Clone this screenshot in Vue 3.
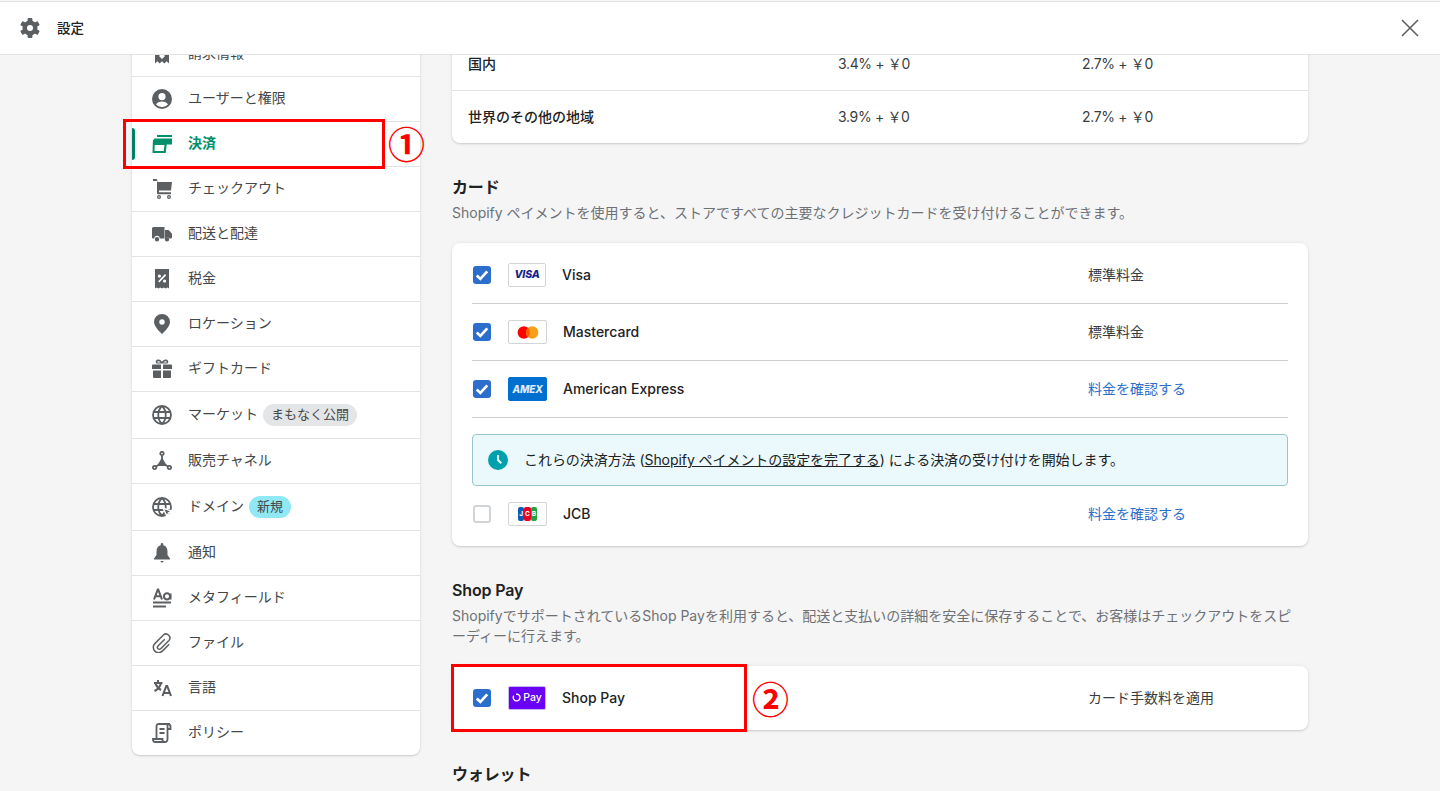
<script setup>
const gridLines = 'M10 1a9 9 0 1 0 0 18 9 9 0 0 0 0-18zM10 1c-5 5-5 13 0 18M10 1c5 5 5 13 0 18M1.500 7h17M1.500 13h17'
const icons = {
  billing: [{ t: 'f', d: 'M3 0h14v19.500l-2.300-2.200-2.400 2.200-2.300-2.200-2.300 2.200-2.400-2.200L3 19.500zM7 12l3 3 3-3-3-3z' }],
  user: [{ t: 'f', d: 'M10 0a10 10 0 1 0 0 20 10 10 0 0 0 0-20zM10 4a3.600 3.600 0 1 1 0 7.200A3.600 3.600 0 0 1 10 4zM4 15.600c1.100-2 3.200-3 6-3s4.900 1 6 3A8 8 0 0 1 10 18a8 8 0 0 1-6-2.400z' }],
  card: [{ t: 'f', d: 'M5 1h15v2H5zM2.500 4.500H20v6h-5.300l-1 8.500H.5l.4-12.500zM2.700 11l-.2 6h9.300l.7-6z' }],
  cart: [{ t: 'f', d: 'M1 0h3.200a1 1 0 0 1 1 .9L5.400 3H20l-1 8.500H7v1.700h12v2H6a1 1 0 0 1-1-1V2H1zM7 16a2 2 0 1 1 0 4 2 2 0 0 1 0-4zm0 1.300a.7.7 0 1 0 0 1.400.7.7 0 0 0 0-1.400zM17 16a2 2 0 1 1 0 4 2 2 0 0 1 0-4zm0 1.300a.7.7 0 1 0 0 1.400.7.7 0 0 0 0-1.400z' }],
  truck: [{ t: 'f', d: 'M1.500 3H12.500v11.500H7.700a2.700 2.700 0 0 0-5.400 0H1a1 1 0 0 1-1-1V4.500A1.500 1.500 0 0 1 1.500 3zM13 6h3.300a1 1 0 0 1 .8.4l2.900 3.300v3.800a1 1 0 0 1-1 1h-1.300a2.700 2.700 0 0 0-4.700-.2zM5 13a2.200 2.200 0 1 1 0 4.400A2.200 2.200 0 0 1 5 13zM15 13a2.200 2.200 0 1 1 0 4.400 2.200 2.200 0 0 1 0-4.400z' }],
  tax: [{ t: 'f', d: 'M3 0h14v19.500l-1.700-1-1.700 1-1.800-1-1.800 1-1.800-1-1.800 1-1.700-1-1.700 1zM7.400 5.500a1.600 1.600 0 1 0 0 3.200 1.600 1.600 0 0 0 0-3.200zM12.600 10.500a1.600 1.600 0 1 0 0 3.200 1.600 1.600 0 0 0 0-3.200zM13 5L6.200 12.200l1.200 1.200 6.800-7.200z' }],
  pin: [{ t: 'f', d: 'M10 0a8 8 0 0 0-8 8c0 5 8 12 8 12s8-7 8-12a8 8 0 0 0-8-8zm0 5.300a2.700 2.700 0 1 1 0 5.400 2.700 2.700 0 0 1 0-5.400z' }],
  gift: [{ t: 'f', d: 'M1 5.500h8V10H0V6.500a1 1 0 0 1 1-1zM11 5.500h8a1 1 0 0 1 1 1V10h-9zM1 11.500h8V19H2a1 1 0 0 1-1-1zM11 11.500h8V18a1 1 0 0 1-1 1h-7zM5 .8c2-1 4 0 5 2 1-2 3-3 5-2 1.800 1 1.400 3.200.4 3.800H4.600C3.600 4 3.200 1.800 5 .8zM6 2.300c-.7 0-.9.8-.4 1.100h2.900C8 2.700 7 2.200 6 2.300zm8 0c-1-.1-2 .4-2.500 1.100h2.900c.5-.3.300-1.100-.4-1.100z' }],
  globe: [{ t: 's', d: gridLines }],
  channels: [
    { t: 's', d: 'M10 .8a1.700 1.700 0 1 0 .01 0zM2.600 14.800a1.700 1.700 0 1 0 .01 0zM17.400 14.800a1.700 1.700 0 1 0 .01 0zM10 4v4M4 15.500l4-2.500M16 15.500l-4-2.500' },
    { t: 'f', d: 'M10 6.500l4.600 7.800a.5.5 0 0 1-.4.7H5.800a.5.5 0 0 1-.4-.7z' }
  ],
  domain: [
    { t: 's', d: gridLines },
    { t: 'w', d: 'M11 11l9 3.300-3.500 1.400-1.400 3.800z' }
  ],
  bell: [{ t: 'f', d: 'M10 0a1.300 1.300 0 0 1 1.300 1.300v1C14.200 3 15.500 5.500 15.500 8.500V12L18 15.500a.6.6 0 0 1-.5 1h-15a.6.6 0 0 1-.5-1L4.500 12V8.500c0-3 1.300-5.500 4.200-6.200v-1A1.300 1.300 0 0 1 10 0zM8.500 18h3a1.500 1.500 0 0 1-3 0z' }],
  meta: [{ t: 'h', d: 'M2 11.500L5.800 1.500h.4L10 11.500M3.300 8.300h5.400M18.500 5.500v6M15 5.300a3.100 3.100 0 1 0 0 6.200 3.100 3.100 0 0 0 0-6.200zM1 14.500h18M1 18.500h13' }],
  clip: [{ t: 'c', d: 'M12.800 6.200l-6.800 6.800a1.900 1.900 0 0 0 2.700 2.700l8.200-8.200a3.900 3.900 0 0 0-5.500-5.500L2.800 10.600a5.300 5.300 0 0 0 7.500 7.500l6.900-6.900' }],
  lang: [
    { t: 'h', d: 'M2 5h8.500M6 2v3M9 5c-1 4-3 6.500-6.500 8M3.500 5.500c1 3 2.800 5 5.500 6.500' },
    { t: 'h', d: 'M10.500 18l3.800-10h.9l3.800 10M12 15h6' }
  ],
  policy: [{ t: 's', d: 'M4.500 16V3a2 2 0 0 1 2-2H18M16 1a2.500 2.500 0 0 1 2.500 2.500V6H15M15.500 1.500V16.500A2.500 2.500 0 0 1 13 19H3a2 2 0 0 1-2-2v-1h9.500v1a2 2 0 0 0 2 2M7.500 6h5M7.500 10h5' }]
}

const menu = [
  { icon: 'billing', label: '請求情報' },
  { icon: 'user', label: 'ユーザーと権限' },
  { icon: 'card', label: '決済', active: true },
  { icon: 'cart', label: 'チェックアウト' },
  { icon: 'truck', label: '配送と配達' },
  { icon: 'tax', label: '税金' },
  { icon: 'pin', label: 'ロケーション' },
  { icon: 'gift', label: 'ギフトカード' },
  { icon: 'globe', label: 'マーケット', badge: 'まもなく公開', badgeKind: 'grey' },
  { icon: 'channels', label: '販売チャネル' },
  { icon: 'domain', label: 'ドメイン', badge: '新規', badgeKind: 'new' },
  { icon: 'bell', label: '通知' },
  { icon: 'meta', label: 'メタフィールド' },
  { icon: 'clip', label: 'ファイル' },
  { icon: 'lang', label: '言語' },
  { icon: 'policy', label: 'ポリシー' }
]

const rates = [
  { name: '国内', a: '3.4% + ￥0', b: '2.7% + ￥0' },
  { name: '世界のその他の地域', a: '3.9% + ￥0', b: '2.7% + ￥0' }
]
</script>

<template>
  <div class="page">
    <header class="topbar">
      <svg class="gear" viewBox="0 0 20 20" aria-hidden="true">
        <rect x="7.600" y="0" width="4.800" height="20" rx="1" />
        <rect x="7.600" y="0" width="4.800" height="20" rx="1" transform="rotate(60 10 10)" />
        <rect x="7.600" y="0" width="4.800" height="20" rx="1" transform="rotate(120 10 10)" />
        <path fill-rule="evenodd" d="M10 2.500a7.500 7.500 0 1 0 0 15 7.500 7.500 0 0 0 0-15zM10 7a3 3 0 1 1 0 6 3 3 0 0 1 0-6z" />
        <circle cx="10" cy="10" r="3" fill="#fff" />
      </svg>
      <span class="title">設定</span>
      <svg class="close" viewBox="0 0 18 18" aria-hidden="true">
        <path d="M1 1l16 16M17 1L1 17" />
      </svg>
    </header>

    <div class="viewport">
      <div class="columns">
        <nav class="side card-box">
          <div
            v-for="m in menu"
            :key="m.label"
            class="row"
            :class="{ active: m.active }"
          >
            <svg class="ico" viewBox="0 0 20 20" aria-hidden="true">
              <path
                v-for="(p, i) in icons[m.icon]"
                :key="i"
                :class="p.t"
                :d="p.d"
              />
            </svg>
            <span class="lbl">{{ m.label }}</span>
            <span v-if="m.badge" class="badge" :class="m.badgeKind">{{ m.badge }}</span>
          </div>
        </nav>

        <main class="main">
          <section class="card-box rates">
            <div v-for="r in rates" :key="r.name" class="rate">
              <strong class="rate-name">{{ r.name }}</strong>
              <span class="rate-val">{{ r.a }}</span>
              <span class="rate-val">{{ r.b }}</span>
            </div>
          </section>

          <h2 class="h">カード</h2>
          <p class="d">Shopify ペイメントを使用すると、ストアですべての主要なクレジットカードを受け付けることができます。</p>
          <section class="card-box methods">
            <div class="method line">
              <span class="cb on"><svg viewBox="0 0 12 12"><path d="M2.500 6.300l2.400 2.300 4.600-5" /></svg></span>
              <span class="logo visa">VISA</span>
              <span class="mname">Visa</span>
              <span class="fee">標準料金</span>
            </div>
            <div class="method line">
              <span class="cb on"><svg viewBox="0 0 12 12"><path d="M2.500 6.300l2.400 2.300 4.600-5" /></svg></span>
              <span class="logo wide mc">
                <svg viewBox="0 0 24 14" width="22" height="13">
                  <circle cx="7.500" cy="7" r="6.800" fill="#f00" />
                  <circle cx="16.500" cy="7" r="6.800" fill="#f79e1b" />
                  <path d="M12 2a6.800 6.800 0 0 1 0 10 6.800 6.800 0 0 1 0-10z" fill="#ff5f00" />
                </svg>
              </span>
              <span class="mname">Mastercard</span>
              <span class="fee">標準料金</span>
            </div>
            <div class="method line">
              <span class="cb on"><svg viewBox="0 0 12 12"><path d="M2.500 6.300l2.400 2.300 4.600-5" /></svg></span>
              <span class="logo wide amex">AMEX</span>
              <span class="mname">American Express</span>
              <a class="fee link">料金を確認する</a>
            </div>
            <div class="banner">
              <svg class="clock" viewBox="0 0 20 20" aria-hidden="true">
                <path fill-rule="evenodd" d="M10 0a10 10 0 1 0 0 20 10 10 0 0 0 0-20zM9 5h2v4.600l3 3-1.400 1.400L9 10.400z" />
              </svg>
              <span class="banner-text">これらの決済方法 (<u>Shopify ペイメントの設定を完了する</u>) による決済の受け付けを開始します。</span>
            </div>
            <div class="method">
              <span class="cb"></span>
              <span class="logo wide jcb">
                <i class="j1">J</i><i class="j2">C</i><i class="j3">B</i>
              </span>
              <span class="mname">JCB</span>
              <a class="fee link">料金を確認する</a>
            </div>
          </section>

          <h2 class="h">Shop Pay</h2>
          <p class="d">ShopifyでサポートされているShop Payを利用すると、配送と支払いの詳細を安全に保存することで、お客様はチェックアウトをスピーディーに行えます。</p>
          <section class="card-box methods">
            <div class="method">
              <span class="cb on"><svg viewBox="0 0 12 12"><path d="M2.500 6.300l2.400 2.300 4.600-5" /></svg></span>
              <span class="logo shop">
                <svg viewBox="0 0 10 10" width="10" height="10"><path d="M4 1.200h1.500a3.400 3.400 0 1 1-3.800 1.500" /></svg>
                <b>Pay</b>
              </span>
              <span class="mname">Shop Pay</span>
              <span class="fee">カード手数料を適用</span>
            </div>
          </section>

          <h2 class="h">ウォレット</h2>
        </main>
      </div>
    </div>

    <div class="mark mark-one"></div>
    <div class="num num-one">①</div>
    <div class="mark mark-two"></div>
    <div class="num num-two">②</div>
  </div>
</template>

<style scoped>
.page {
  position: relative;
  width: 1440px;
  height: 791px;
  overflow: hidden;
  display: flex;
  flex-direction: column;
  background: #f5f5f5;
  color: #202223;
  font-family: Inter, "Noto Sans CJK JP", sans-serif;
  font-size: 14px;
  line-height: 20px;
}
.topbar {
  flex: none;
  box-sizing: content-box;
  height: 52px;
  margin-top: 1px;
  background: #fff;
  border-top: 1px solid #e1e3e5;
  border-bottom: 1px solid #e1e3e5;
  display: flex;
  align-items: center;
  padding: 0 20px;
}
.gear {
  width: 20px;
  height: 20px;
  fill: #5c5f62;
}
.title {
  margin-left: 17px;
  font-size: 13.500px;
  font-weight: 500;
}
.close {
  margin-left: auto;
  margin-right: 1px;
  width: 18px;
  height: 18px;
  fill: none;
  stroke: #5c5f62;
  stroke-width: 1.600;
}
.viewport {
  flex: 1;
  min-height: 0;
  overflow: hidden;
}
.columns {
  display: flex;
  gap: 32px;
  margin-top: -23px;
  padding-left: 132px;
}
.card-box {
  background: #fff;
  border-radius: 8px;
  box-shadow: 0 0 5px rgba(23, 24, 24, 0.05), 0 1px 2px rgba(0, 0, 0, 0.15);
}
.side {
  flex: none;
  width: 288px;
  align-self: flex-start;
}
.row {
  position: relative;
  display: flex;
  align-items: center;
  padding: 12px 0 12px 20px;
  border-bottom: 1px solid #e1e3e5;
  color: #44474a;
}
.row:last-child {
  border-bottom: 0;
}
.lbl {
  margin-top: -2px;
}
.ico {
  flex: none;
  width: 20px;
  height: 20px;
  margin-right: 16px;
  color: #5c5f62;
}
.ico .f {
  fill: currentColor;
  fill-rule: evenodd;
}
.ico .s {
  fill: none;
  stroke: currentColor;
  stroke-width: 1.800;
}
.ico .h {
  fill: none;
  stroke: currentColor;
  stroke-width: 2.100;
}
.ico .c {
  fill: none;
  stroke: currentColor;
  stroke-width: 1.500;
}
.ico .w {
  fill: currentColor;
  stroke: #fff;
  stroke-width: 1.400;
}
.active {
  color: #00906c;
  font-weight: 600;
}
.active .ico {
  color: #00906c;
}
.active::before {
  content: "";
  position: absolute;
  left: 0;
  top: 6px;
  bottom: 6px;
  width: 3px;
  border-radius: 0 3px 3px 0;
  background: #008060;
}
.badge {
  margin-left: 5px;
  height: 22px;
  line-height: 21px;
  padding: 0 8px;
  border-radius: 11px;
  font-size: 13px;
  color: #44474a;
}
.grey {
  background: #e4e5e7;
}
.new {
  background: #90e8f5;
}
.main {
  flex: none;
  width: 856px;
}
.rates {
  padding-top: 6px;
}
.rate {
  display: grid;
  grid-template-columns: 370px 244px 1fr;
  align-items: center;
  height: 52px;
  padding-left: 16px;
}
.rate:first-child {
  border-bottom: 1px solid #e1e3e5;
}
.rate-name {
  font-weight: 500;
  margin-top: -1px;
}
.rate-val {
  letter-spacing: -0.350px;
  color: #3a3d40;
}
.h {
  margin: 32px 0 4px;
  font-size: 16px;
  line-height: 24px;
  font-weight: 600;
  letter-spacing: -0.150px;
}
.d {
  margin: 0 0 20px;
  max-width: 845px;
  color: #6d7175;
  font-size: 14px;
  line-height: 20px;
}
.methods {
  padding: 4px 20px;
}
.method {
  display: flex;
  align-items: center;
  height: 56px;
}
.line {
  border-bottom: 1px solid #c9cccf;
  box-sizing: content-box;
}
.cb {
  flex: none;
  width: 18px;
  height: 18px;
  margin-left: 1px;
  margin-right: 17px;
  border-radius: 3px;
  box-sizing: border-box;
  border: 2px solid #d2d5d8;
}
.cb.on {
  background: #2c6ecb;
  border: 0;
}
.cb svg {
  display: block;
  fill: none;
  stroke: #fff;
  stroke-width: 1.800;
  width: 18px;
  height: 18px;
}
.logo {
  flex: none;
  box-sizing: border-box;
  width: 38px;
  height: 24px;
  margin-right: 16px;
  border: 1px solid #d2d5d8;
  border-radius: 2px;
  background: #fff;
  display: flex;
  align-items: center;
  justify-content: center;
}
.wide {
  width: 39px;
}
.visa {
  font-size: 10.500px;
  line-height: 1;
  font-weight: 800;
  font-style: italic;
  color: #1a1f8f;
  letter-spacing: -0.200px;
}
.amex {
  background: #016fd0;
  border-color: #016fd0;
  color: #dcecfa;
  font-size: 10px;
  font-weight: 800;
  font-style: italic;
  letter-spacing: -0.200px;
}
.jcb i {
  width: 6.300px;
  height: 14px;
  color: #fff;
  font-style: normal;
  font-weight: 700;
  font-size: 6.500px;
  line-height: 14px;
  text-align: center;
  border-radius: 2px;
}
.j1 {
  background: #0b5cb8;
}
.j2 {
  background: #e60023;
}
.j3 {
  background: #1fa33f;
}
.shop {
  background: #6a00f4;
  border-color: #c9b8f2;
  gap: 1px;
  color: #fff;
}
.shop svg {
  fill: none;
  stroke: #fff;
  stroke-width: 1.400;
}
.shop b {
  font-size: 10.500px;
  line-height: 1;
  font-weight: 500;
}
.mname {
  flex: 1;
  font-size: 14px;
  font-weight: 500;
}
.fee {
  flex: none;
  width: 200px;
  white-space: nowrap;
  color: #3a3d40;
}
.fee.link {
  color: #2c6ecb;
}
.banner {
  display: flex;
  align-items: center;
  height: 52px;
  box-sizing: border-box;
  margin-top: 16px;
  padding-left: 15px;
  border: 1px solid #98c6cd;
  border-radius: 4px;
  background: #ebf9fc;
}
.clock {
  flex: none;
  width: 20px;
  height: 20px;
  margin-right: 16px;
  fill: #00a0ac;
}
.banner-text {
  letter-spacing: -0.060px;
}
.mark {
  position: absolute;
  box-sizing: border-box;
  border: 3px solid #f00;
}
.mark-one {
  left: 123px;
  top: 119px;
  width: 262px;
  height: 50px;
}
.mark-two {
  left: 451px;
  top: 664px;
  width: 296px;
  height: 68px;
}
.num {
  position: absolute;
  color: #f00;
  font-family: "Noto Sans CJK JP", sans-serif;
  font-size: 37px;
  font-weight: 700;
  line-height: 40px;
}
.num-one {
  left: 388px;
  top: 123px;
}
.num-two {
  left: 752px;
  top: 678px;
}
</style>
